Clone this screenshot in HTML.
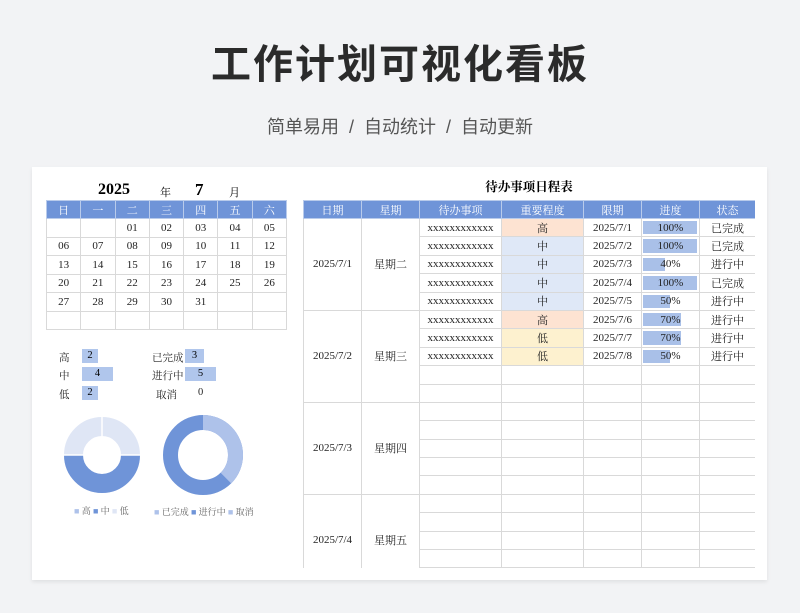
<!DOCTYPE html>
<html><head><meta charset="utf-8">
<style>
*{margin:0;padding:0;box-sizing:border-box}
body{width:800px;height:613px;background:#f2f3f5;position:relative;overflow:hidden;font-family:"Liberation Sans","Noto Sans CJK SC",sans-serif}
.title{position:absolute;top:32px;left:0;width:800px;text-align:center;font-size:40px;font-weight:bold;color:#2b2b2b;letter-spacing:2px}
.sub{position:absolute;top:113px;left:0;width:800px;text-align:center;font-size:18px;color:#555}
.card{position:absolute;left:32px;top:167px;width:735px;height:413px;background:#fff;box-shadow:0 2px 4px rgba(0,0,0,.08)}
.ser{font-family:"Liberation Serif","Noto Serif CJK SC",serif}
table{border-collapse:collapse;table-layout:fixed;position:absolute}
td{border:1px solid #d9d9d9;text-align:center;font-size:11px;color:#222;padding:0;white-space:nowrap;overflow:hidden}
th{background:#6f94d8;color:#fff;font-weight:normal;font-size:11px;border:1px solid #b9cbeb;height:18px}
.cal td{height:18.5px}
.t td{height:18.4px;position:relative}
.hi{background:#fde3d2}.mid{background:#dfe8f7}.lo{background:#fdf1cf}
.bar{position:absolute;left:1px;top:2px;bottom:2px;background:#a9c0e8}
.pc{position:relative}
.lab{position:absolute;font-size:10.5px;color:#222}
.b{position:absolute;background:#b0c6ec;height:14px;font-size:10.5px;text-align:center;line-height:14px}
.leg{position:absolute;font-size:9px;color:#666}
</style></head><body>
<div class="title">工作计划可视化看板</div>
<div class="sub">简单易用 &nbsp;/&nbsp; 自动统计 &nbsp;/&nbsp; 自动更新</div>
<div class="card ser">
 <div style="position:absolute;left:66px;top:14px;font-size:16px;font-weight:bold">2025</div>
 <div style="position:absolute;left:128px;top:17px;font-size:11px">年</div>
 <div style="position:absolute;left:163px;top:13px;font-size:17px;font-weight:bold">7</div>
 <div style="position:absolute;left:197px;top:17px;font-size:11px">月</div>
 <table class="cal" style="left:14px;top:33px;width:241px">
  <tr><th>日</th><th>一</th><th>二</th><th>三</th><th>四</th><th>五</th><th>六</th></tr>
  <tr><td></td><td></td><td>01</td><td>02</td><td>03</td><td>04</td><td>05</td></tr>
  <tr><td>06</td><td>07</td><td>08</td><td>09</td><td>10</td><td>11</td><td>12</td></tr>
  <tr><td>13</td><td>14</td><td>15</td><td>16</td><td>17</td><td>18</td><td>19</td></tr>
  <tr><td>20</td><td>21</td><td>22</td><td>23</td><td>24</td><td>25</td><td>26</td></tr>
  <tr><td>27</td><td>28</td><td>29</td><td>30</td><td>31</td><td></td><td></td></tr>
  <tr><td></td><td></td><td></td><td></td><td></td><td></td><td></td></tr>
 </table>
 <div class="lab" style="left:27px;top:183px">高</div><div class="b" style="left:50px;top:182px;width:16px">2</div>
 <div class="lab" style="left:27px;top:201px">中</div><div class="b" style="left:50px;top:200px;width:31px">4</div>
 <div class="lab" style="left:27px;top:220px">低</div><div class="b" style="left:50px;top:219px;width:16px">2</div>
 <div class="lab" style="left:120px;top:183px">已完成</div><div class="b" style="left:153px;top:182px;width:19px">3</div>
 <div class="lab" style="left:120px;top:201px">进行中</div><div class="b" style="left:153px;top:200px;width:31px">5</div>
 <div class="lab" style="left:124px;top:220px">取消</div><div class="lab" style="left:166px;top:220px">0</div>
 <svg style="position:absolute;left:0;top:230px" width="260" height="130">
  <g transform="translate(70,58)">
   <circle r="28.5" fill="none" stroke="#dfe6f5" stroke-width="19"/>
   <circle r="28.5" fill="none" stroke="#6f94d8" stroke-width="19" stroke-dasharray="89.5 179" stroke-dashoffset="0"/>
   <circle r="28.5" fill="none" stroke="#aec2ea" stroke-width="19" stroke-dasharray="44.8 179" stroke-dashoffset="44.8"/>
   <line x1="0" y1="-39" x2="0" y2="-18" stroke="#fff" stroke-width="1.5"/>
   <line x1="-39" y1="0" x2="39" y2="0" stroke="#fff" stroke-width="1.5"/>
  </g>
  <g transform="translate(171,58) rotate(-90)">
   <circle r="32.5" fill="none" stroke="#6f94d8" stroke-width="15"/>
   <circle r="32.5" fill="none" stroke="#aec2ea" stroke-width="15" stroke-dasharray="76.6 204.2"/>
  </g>
 </svg>
 <div class="leg" style="left:42px;top:337px"><span style="color:#aec2ea">■</span> 高 <span style="color:#6f94d8">■</span> 中 <span style="color:#dfe6f5">■</span> 低</div>
 <div class="leg" style="left:122px;top:338px"><span style="color:#aec2ea">■</span> 已完成 <span style="color:#6f94d8">■</span> 进行中 <span style="color:#aec2ea">■</span> 取消</div>

 <div style="position:absolute;left:271px;top:10px;width:452px;text-align:center;font-size:12.5px;font-weight:bold">待办事项日程表</div>
 <div style="position:absolute;left:271px;top:33px;width:452px;height:368px;overflow:hidden">
 <table class="t" style="left:0;top:0;width:452px">
  <colgroup><col style="width:58px"><col style="width:58px"><col style="width:82px"><col style="width:82px"><col style="width:58px"><col style="width:58px"><col style="width:56px"></colgroup>
  <tr><th>日期</th><th>星期</th><th>待办事项</th><th>重要程度</th><th>限期</th><th>进度</th><th>状态</th></tr>
  <tr><td rowspan="5">2025/7/1</td><td rowspan="5">星期二</td><td>xxxxxxxxxxxx</td><td class="hi">高</td><td>2025/7/1</td><td><div class="bar" style="width:54px"></div><span class="pc">100%</span></td><td>已完成</td></tr>
  <tr><td>xxxxxxxxxxxx</td><td class="mid">中</td><td>2025/7/2</td><td><div class="bar" style="width:54px"></div><span class="pc">100%</span></td><td>已完成</td></tr>
  <tr><td>xxxxxxxxxxxx</td><td class="mid">中</td><td>2025/7/3</td><td><div class="bar" style="width:22px"></div><span class="pc">40%</span></td><td>进行中</td></tr>
  <tr><td>xxxxxxxxxxxx</td><td class="mid">中</td><td>2025/7/4</td><td><div class="bar" style="width:54px"></div><span class="pc">100%</span></td><td>已完成</td></tr>
  <tr><td>xxxxxxxxxxxx</td><td class="mid">中</td><td>2025/7/5</td><td><div class="bar" style="width:27px"></div><span class="pc">50%</span></td><td>进行中</td></tr>
  <tr><td rowspan="5">2025/7/2</td><td rowspan="5">星期三</td><td>xxxxxxxxxxxx</td><td class="hi">高</td><td>2025/7/6</td><td><div class="bar" style="width:38px"></div><span class="pc">70%</span></td><td>进行中</td></tr>
  <tr><td>xxxxxxxxxxxx</td><td class="lo">低</td><td>2025/7/7</td><td><div class="bar" style="width:38px"></div><span class="pc">70%</span></td><td>进行中</td></tr>
  <tr><td>xxxxxxxxxxxx</td><td class="lo">低</td><td>2025/7/8</td><td><div class="bar" style="width:27px"></div><span class="pc">50%</span></td><td>进行中</td></tr>
  <tr><td></td><td></td><td></td><td></td><td></td></tr>
  <tr><td></td><td></td><td></td><td></td><td></td></tr>
  <tr><td rowspan="5">2025/7/3</td><td rowspan="5">星期四</td><td></td><td></td><td></td><td></td><td></td></tr>
  <tr><td></td><td></td><td></td><td></td><td></td></tr>
  <tr><td></td><td></td><td></td><td></td><td></td></tr>
  <tr><td></td><td></td><td></td><td></td><td></td></tr>
  <tr><td></td><td></td><td></td><td></td><td></td></tr>
  <tr><td rowspan="5">2025/7/4</td><td rowspan="5">星期五</td><td></td><td></td><td></td><td></td><td></td></tr>
  <tr><td></td><td></td><td></td><td></td><td></td></tr>
  <tr><td></td><td></td><td></td><td></td><td></td></tr>
  <tr><td></td><td></td><td></td><td></td><td></td></tr>
  <tr><td></td><td></td><td></td><td></td><td></td></tr>
 </table>
 </div>
</div>
</body></html>
